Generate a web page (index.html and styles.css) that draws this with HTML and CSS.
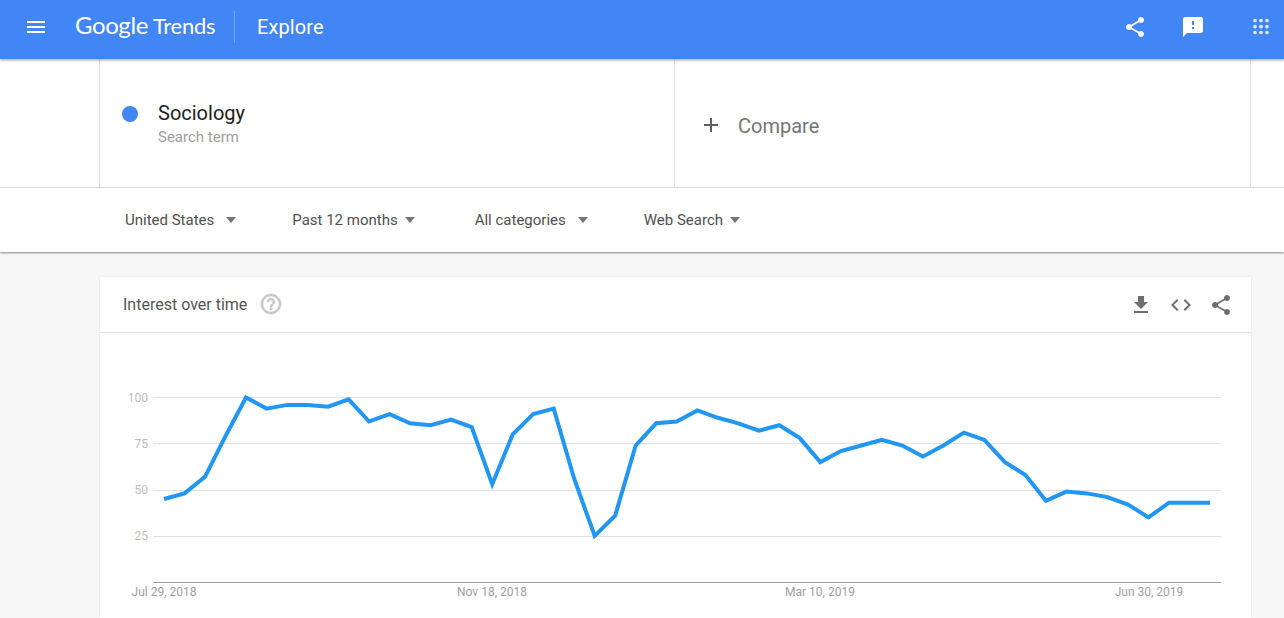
FILE: index.html
```html
<!DOCTYPE html>
<html>
<head>
    <title>Explore - Google Trends</title>
    <link rel="stylesheet" href="styles.css">
</head>
<body>
    <header class="topbar">
        <svg class="icon menu-icon" viewBox="0 0 24 24"><path d="M3 18h18v-2H3v2zm0-5h18v-2H3v2zm0-7v2h18V6H3z"/></svg>
        <div class="logo"><span class="logo-google">Google</span><span class="logo-trends">Trends</span></div>
        <div class="divider"></div>
        <div class="page-title">Explore</div>
        <div class="topbar-right">
            <svg class="icon" viewBox="0 0 24 24"><path d="M18 16.08c-.76 0-1.44.3-1.96.77L8.91 12.7c.05-.23.09-.46.09-.7s-.04-.47-.09-.7l7.05-4.11c.54.5 1.25.81 2.04.81 1.66 0 3-1.34 3-3s-1.34-3-3-3-3 1.34-3 3c0 .24.04.47.09.7L8.04 9.81C7.5 9.31 6.79 9 6 9c-1.66 0-3 1.34-3 3s1.34 3 3 3c.79 0 1.5-.31 2.04-.81l7.12 4.16c-.05.21-.08.43-.08.65 0 1.61 1.31 2.92 2.92 2.92 1.61 0 2.92-1.31 2.92-2.92s-1.31-2.92-2.92-2.92z"/></svg>
            <svg class="icon feedback-icon" viewBox="0 0 24 24"><path d="M20 2H4c-1.1 0-1.99.9-1.99 2L2 22l4-4h14c1.1 0 2-.9 2-2V4c0-1.1-.9-2-2-2zm-7 12h-2v-2h2v2zm0-4h-2V6h2v4z"/></svg>
            <svg class="icon apps-icon" viewBox="0 0 24 24">
                <circle cx="5.5" cy="5" r="2"/><circle cx="12" cy="5" r="2"/><circle cx="18.5" cy="5" r="2"/>
                <circle cx="5.5" cy="11.5" r="2"/><circle cx="12" cy="11.5" r="2"/><circle cx="18.5" cy="11.5" r="2"/>
                <circle cx="5.5" cy="18" r="2"/><circle cx="12" cy="18" r="2"/><circle cx="18.5" cy="18" r="2"/>
            </svg>
        </div>
    </header>

    <section class="search-row">
        <div class="term-box">
            <span class="term-dot"></span>
            <div>
                <div class="term-name">Sociology</div>
                <div class="term-type">Search term</div>
            </div>
        </div>
        <div class="compare-box">
            <svg class="plus-icon" viewBox="0 0 24 24"><path d="M19 13h-6v6h-2v-6H5v-2h6V5h2v6h6v2z"/></svg>
            <span class="compare-label">Compare</span>
        </div>
    </section>

    <nav class="filters">
        <div class="filter">United States <span class="arrow"></span></div>
        <div class="filter filter-tight">Past 12 months <span class="arrow"></span></div>
        <div class="filter">All categories <span class="arrow"></span></div>
        <div class="filter filter-tight">Web Search <span class="arrow"></span></div>
    </nav>

    <main class="content">
        <div class="card">
            <div class="card-header">
                <span class="card-title">Interest over time</span>
                <svg class="help-icon" viewBox="0 0 24 24"><path d="M11 18h2v-2h-2v2zm1-16C6.48 2 2 6.48 2 12s4.48 10 10 10 10-4.48 10-10S17.52 2 12 2zm0 18c-4.41 0-8-3.59-8-8s3.59-8 8-8 8 3.59 8 8-3.59 8-8 8zm0-14c-2.21 0-4 1.79-4 4h2c0-1.1.9-2 2-2s2 .9 2 2c0 2-3 1.75-3 5h2c0-2.25 3-2.5 3-5 0-2.21-1.79-4-4-4z"/></svg>
                <div class="card-actions">
                    <svg class="action-icon" viewBox="0 0 24 24"><path d="M19 9h-4V3H9v6H5l7 7 7-7zM5 18v2h14v-2H5z"/></svg>
                    <svg class="action-icon" viewBox="0 0 24 24"><path d="M9.4 16.6L4.8 12l4.6-4.6L8 6l-6 6 6 6 1.4-1.4zm5.2 0l4.6-4.6-4.6-4.6L16 6l6 6-6 6-1.4-1.4z"/></svg>
                    <svg class="action-icon" viewBox="0 0 24 24"><path d="M18 16.08c-.76 0-1.44.3-1.96.77L8.91 12.7c.05-.23.09-.46.09-.7s-.04-.47-.09-.7l7.05-4.11c.54.5 1.25.81 2.04.81 1.66 0 3-1.34 3-3s-1.34-3-3-3-3 1.34-3 3c0 .24.04.47.09.7L8.04 9.81C7.5 9.31 6.79 9 6 9c-1.66 0-3 1.34-3 3s1.34 3 3 3c.79 0 1.5-.31 2.04-.81l7.12 4.16c-.05.21-.08.43-.08.65 0 1.61 1.31 2.92 2.92 2.92 1.61 0 2.92-1.31 2.92-2.92s-1.31-2.92-2.92-2.92z"/></svg>
                </div>
            </div>
            <!-- viewBox uses page coordinates so the points read like the screenshot -->
            <svg class="chart" viewBox="100 333 1151 285">
                <g class="grid">
                    <line x1="153" x2="1221" y1="397.5" y2="397.5"/>
                    <line x1="153" x2="1221" y1="443.5" y2="443.5"/>
                    <line x1="153" x2="1221" y1="490.5" y2="490.5"/>
                    <line x1="153" x2="1221" y1="536.5" y2="536.5"/>
                </g>
                <line class="baseline" x1="153" x2="1221" y1="582.5" y2="582.5"/>
                <g class="y-labels">
                    <text x="148" y="402">100</text>
                    <text x="148" y="448">75</text>
                    <text x="148" y="494">50</text>
                    <text x="148" y="540">25</text>
                </g>
                <g class="x-labels">
                    <text x="164" y="596">Jul 29, 2018</text>
                    <text x="492" y="596">Nov 18, 2018</text>
                    <text x="820" y="596">Mar 10, 2019</text>
                    <text x="1149" y="596">Jun 30, 2019</text>
                </g>
                <polyline class="trend" points="164,499 184.5,493.4 205,476.8 225.5,436.2 246,397.5 266.6,408.6 287.1,404.9 307.6,404.9 328.1,406.7 348.6,399.3 369.1,421.5 389.6,414.1 410.1,423.3 430.6,425.2 451.1,419.6 471.7,427 492.2,484.2 512.7,434.4 533.2,414.1 553.7,408.6 574.2,478.7 594.7,535.9 615.2,515.6 635.7,445.5 656.2,423.3 676.8,421.5 697.3,410.4 717.8,417.8 738.3,423.3 758.8,430.7 779.3,425.2 799.8,438.1 820.3,462.1 840.8,451 861.3,445.5 881.9,439.9 902.4,445.5 922.9,456.5 943.4,445.5 963.9,432.6 984.4,439.9 1004.9,462.1 1025.4,475 1045.9,500.8 1066.4,491.6 1087,493.4 1107.5,497.1 1128,504.5 1148.5,517.4 1169,502.7 1189.5,502.7 1210,502.7"/>
            </svg>
        </div>
    </main>
</body>
</html>
```

FILE: styles.css
```css
html, body {
    height: 618px;
    overflow: hidden;
}
body {
    margin: 0;
    font-family: Roboto, "Liberation Sans", sans-serif;
    background-color: #f7f7f7;
}
.topbar {
    position: relative;
    z-index: 2;
    display: flex;
    align-items: center;
    height: 59px;
    padding: 0 12px 5px 24px;
    box-sizing: border-box;
    background-color: #4285f4;
    color: #fff;
    box-shadow: 0 1px 3px rgba(0,0,0,0.4);
}
.icon {
    width: 24px;
    height: 24px;
    fill: #fff;
}
.menu-icon {
    margin-right: 27px;
}
.logo {
    display: flex;
    align-items: baseline;
    gap: 5px;
    width: 159px;
    margin-bottom: 3px;
    font-family: Lato, sans-serif;
    font-size: 24px;
    line-height: 32px;
    white-space: nowrap;
}
.logo-google {
    letter-spacing: -0.4px;
}
.logo-trends {
    font-size: 22px;
    letter-spacing: -0.25px;
}
.divider {
    width: 1px;
    height: 32px;
    background-color: rgba(255,255,255,0.25);
    margin-right: 22px;
}
.page-title {
    font-size: 20px;
    line-height: 28px;
    letter-spacing: 0.1px;
    margin-bottom: 1px;
}
.topbar-right {
    display: flex;
    align-items: center;
    gap: 33px;
    margin-left: auto;
}
.feedback-icon {
    margin-left: 1px;
}
.apps-icon {
    width: 22px;
    height: 22px;
    fill: #e3ecfd;
    margin-left: 12px;
}

.search-row {
    display: flex;
    height: 128px;
    padding-left: 99px;
    background-color: #fff;
    border-bottom: 1px solid #e0e0e0;
}
.term-box {
    display: flex;
    width: 575px;
    padding: 41px 0 0 22px;
    box-sizing: border-box;
    border-left: 1px solid #e0e0e0;
}
.term-dot {
    width: 16px;
    height: 16px;
    margin: 6px 20px 0 0;
    border-radius: 50%;
    background-color: #4285f4;
}
.term-name {
    font-size: 20px;
    line-height: 26px;
    color: #212121;
}
.term-type {
    font-size: 15px;
    line-height: 22px;
    color: #9e9e9e;
}
.compare-box {
    display: flex;
    align-items: center;
    width: 577px;
    padding: 6px 0 0 24px;
    box-sizing: border-box;
    border-left: 1px solid #e0e0e0;
    border-right: 1px solid #e0e0e0;
}
.plus-icon {
    width: 24px;
    height: 24px;
    fill: #616161;
    margin: 0 15px 0 0;
    position: relative;
    top: -1px;
}
.compare-label {
    font-size: 20px;
    color: #757575;
}

.filters {
    position: relative;
    z-index: 1;
    display: flex;
    align-items: center;
    height: 64px;
    padding-left: 125px;
    background-color: #fff;
    box-shadow: 0 1px 2px rgba(0,0,0,0.45);
}
.filter {
    display: flex;
    align-items: center;
    gap: 12px;
    margin-right: 56px;
    font-size: 15px;
    color: #505050;
}
.filter-tight {
    gap: 7px;
    margin-right: 60px;
}
.arrow {
    width: 0;
    height: 0;
    border-left: 5.5px solid transparent;
    border-right: 5.5px solid transparent;
    border-top: 6px solid #757575;
}

.content {
    padding: 25px 33px 0 100px;
}
.card {
    background-color: #fff;
    box-shadow: 0 0 2px rgba(0,0,0,0.1);
}
.card-header {
    display: flex;
    align-items: center;
    height: 55px;
    padding: 0 18px 0 23px;
    border-bottom: 1px solid #e0e0e0;
}
.card-title {
    font-size: 16px;
    color: #555;
}
.help-icon {
    width: 24px;
    height: 24px;
    fill: #c8c8c8;
    stroke: #c8c8c8;
    stroke-width: 0.6;
    margin: 0 0 2px 12px;
}
.card-actions {
    display: flex;
    gap: 16px;
    margin-left: auto;
}
.action-icon {
    width: 24px;
    height: 24px;
    fill: #6e6e6e;
}
.chart {
    display: block;
    width: 1151px;
    height: 285px;
}
.grid line {
    stroke: #e0e0e0;
    stroke-width: 1;
}
.baseline {
    stroke: #9e9e9e;
    stroke-width: 1;
}
.y-labels text {
    font-size: 12px;
    fill: #bdbdbd;
    text-anchor: end;
}
.x-labels text {
    font-size: 12px;
    fill: #9e9e9e;
    text-anchor: middle;
}
.trend {
    fill: none;
    stroke: #2196f3;
    stroke-width: 4;
}
```
